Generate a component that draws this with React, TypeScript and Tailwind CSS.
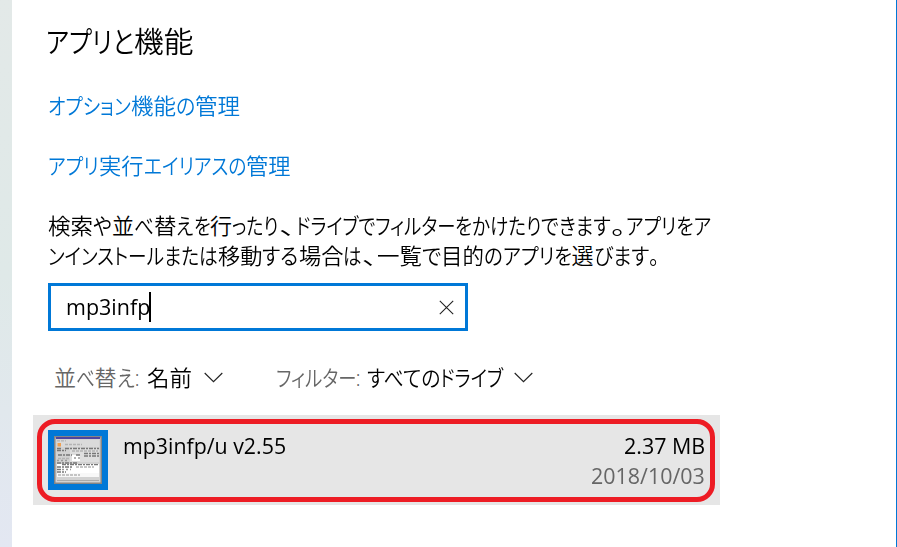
import { useLayoutEffect, useRef } from "react";

type Piece = [text: string, width: number];

function Fit({ text, width }: { text: string; width: number }) {
  const ref = useRef<HTMLSpanElement>(null);
  useLayoutEffect(() => {
    const el = ref.current;
    if (el) el.style.transform = `scaleX(${width / el.offsetWidth})`;
  }, [text, width]);
  return (
    <span className="block shrink-0" style={{ width }}>
      <span ref={ref} className="inline-block origin-left whitespace-pre">{text}</span>
    </span>
  );
}

function Line({ pieces }: { pieces: Piece[] }) {
  return (
    <span className="flex">
      {pieces.map(([text, width], i) => (
        <Fit key={i} text={text} width={width} />
      ))}
    </span>
  );
}

function Chevron() {
  return (
    <svg className="h-[11px] w-[19px] shrink-0" viewBox="0 0 19 11" fill="none" stroke="#222" strokeWidth="1.15">
      <path d="M.7 1 9.5 9.7 18.3 1" />
    </svg>
  );
}

/* Miniature of the application's settings window. */
function AppThumbnail() {
  return (
    <svg className="size-12" viewBox="0 0 48 48">
      <rect width="48" height="48" fill="#858585" />
      <rect x="1.5" y="1.5" width="45" height="45" fill="#d2d2d2" />
      <rect x="2" y="1" width="44" height="2" fill="#4b45a0" />
      <g className="blur-[0.6px]">
        <rect x="3" y="4" width="42" height="7" fill="#dadada" />
        <rect x="3.5" y="7" width="3.5" height="3.5" fill="#f0a050" />
        <rect x="16" y="12" width="29" height="14" fill="#dedede" />
        <rect x="18" y="19" width="8" height="6" fill="#fff" />
        <path fill="#fff" d="M3 28h42v13H25V37H3z" />
        <rect x="3" y="37" width="42" height="4" fill="#f8f8f8" />
        <g fill="none" strokeWidth="1.3">
          <path stroke="#b3b3b3" strokeDasharray="3 1" d="M3 4.8h9M11 8.5h17M18 15h26M4 22.5h12M22 31h18M4 39h22" />
          <path stroke="#777" strokeDasharray="4 1 2 1" d="M3 12.5h5M11 12.5h34M3 14.5h9M4 19h14M22 19h5M30 17.5h15M30 20h15M3 27h20M8 28.7h36M3 31h16M3 33.5h5M3 36h9" />
          <path stroke="#999" strokeDasharray="2 2" d="M3 24.5h11M20 22h6M8 33.5h9" />
        </g>
        <path stroke="#aaa" d="M3 44.5h42" />
      </g>
    </svg>
  );
}

const lineA: Piece[] = [
  ["検索", 45], ["や", 19], ["並", 22], ["べ", 19.5], ["替", 22.5], ["え", 17.5], ["を", 16.5], ["行", 22],
  ["ったり", 46.5], ["、", 17], ["ドライブで", 79], ["フィルター", 80], ["をかけたり", 86],
  ["できます", 70], ["。", 15], ["アプリをア", 85.5],
];
const lineB: Piece[] = [
  ["ンインストール", 116], ["または", 53.5], ["移動", 44.5], ["する", 36.5], ["場合", 44.5],
  ["は", 18.5], ["、", 15.5], ["一覧", 45], ["で", 19], ["目的", 43], ["の", 18.5],
  ["アプリを", 69], ["選", 22], ["び", 19], ["ます", 36], ["。", 10],
];

export default function App() {
  return (
    <div className="flex h-[547px] w-[897px] overflow-hidden border-r border-[#0078d7] bg-white font-['Open_Sans','Noto_Sans_CJK_JP',sans-serif] text-[22px] leading-[30px] text-black [font-feature-settings:'palt']">
      <div className="w-3 shrink-0 bg-linear-to-b from-[#e3e9e8] via-[#dfe9e8] to-[#e3e7f2]" />
      <main className="flex w-[708px] flex-col pl-[21px] font-[350]">
        <div className="pl-[15px]">
          <h1 className="-ml-[2px] mt-[22px] text-[29px] leading-10">
            <Line pieces={[["アプリと", 88], ["機能", 59.5]]} />
          </h1>
          <a className="mt-[28px] block text-[#0078d7]">
            <Line pieces={[["オプション", 83], ["機能", 45], ["の", 19], ["管理", 45]]} />
          </a>
          <a className="mt-[30px] block text-[#0078d7]">
            <Line pieces={[["アプリ", 51], ["実行", 44.5], ["エイリアスの", 102.5], ["管理", 44.5]]} />
          </a>
          <p className="mt-[30px]">
            <Line pieces={lineA} />
            <Line pieces={lineB} />
          </p>
          <div className="mt-[13px] flex h-12 w-[420px] items-center border-3 border-[#0078d7] pr-[11px] pl-[15px] font-normal">
            <div className="-mt-[3px]"><Fit text="mp3infp" width={84} /></div>
            <span className="-ml-px h-[30px] w-[1.5px] bg-black" />
            <svg className="ml-auto size-[15px]" viewBox="0 0 15 15" fill="none" stroke="#222" strokeWidth="1.1">
              <path d="m.8.8 13.4 13.4M14.2.8.8 14.2" />
            </svg>
          </div>
          <div className="mt-[31px] flex items-center pl-[6px]">
            <span className="text-[#666]">
              <Line pieces={[["並", 22], ["べ", 18.5], ["替", 22], ["え", 18], [":", 5]]} />
            </span>
            <span className="ml-[7px] mr-[12px]"><Line pieces={[["名前", 45]]} /></span>
            <Chevron />
            <span className="ml-[53px] text-[#666]">
              <Line pieces={[["フィルター", 80], [":", 5]]} />
            </span>
            <span className="ml-[6px] mr-[11px]"><Line pieces={[["すべての", 73], ["ドライブ", 63]]} /></span>
            <Chevron />
          </div>
        </div>
        <div className="relative mt-[23px] flex h-[90px] w-[687px] bg-[#e6e6e6] pr-[15px] pl-[15px] pt-[15px] font-normal">
          <div className="size-[60px] shrink-0 bg-[#0078d7] p-[6px]">
            <AppThumbnail />
          </div>
          <div className="ml-[15px]"><Fit text="mp3infp/u v2.55" width={163} /></div>
          <div className="ml-auto flex flex-col items-end">
            <Fit text="2.37 MB" width={81} />
            <span className="text-[#666]"><Fit text="2018/10/03" width={114} /></span>
          </div>
          <div className="absolute top-1 left-1 h-[83px] w-[678px] rounded-[18px] border-5 border-[#ed1c24]" />
        </div>
      </main>
    </div>
  );
}
